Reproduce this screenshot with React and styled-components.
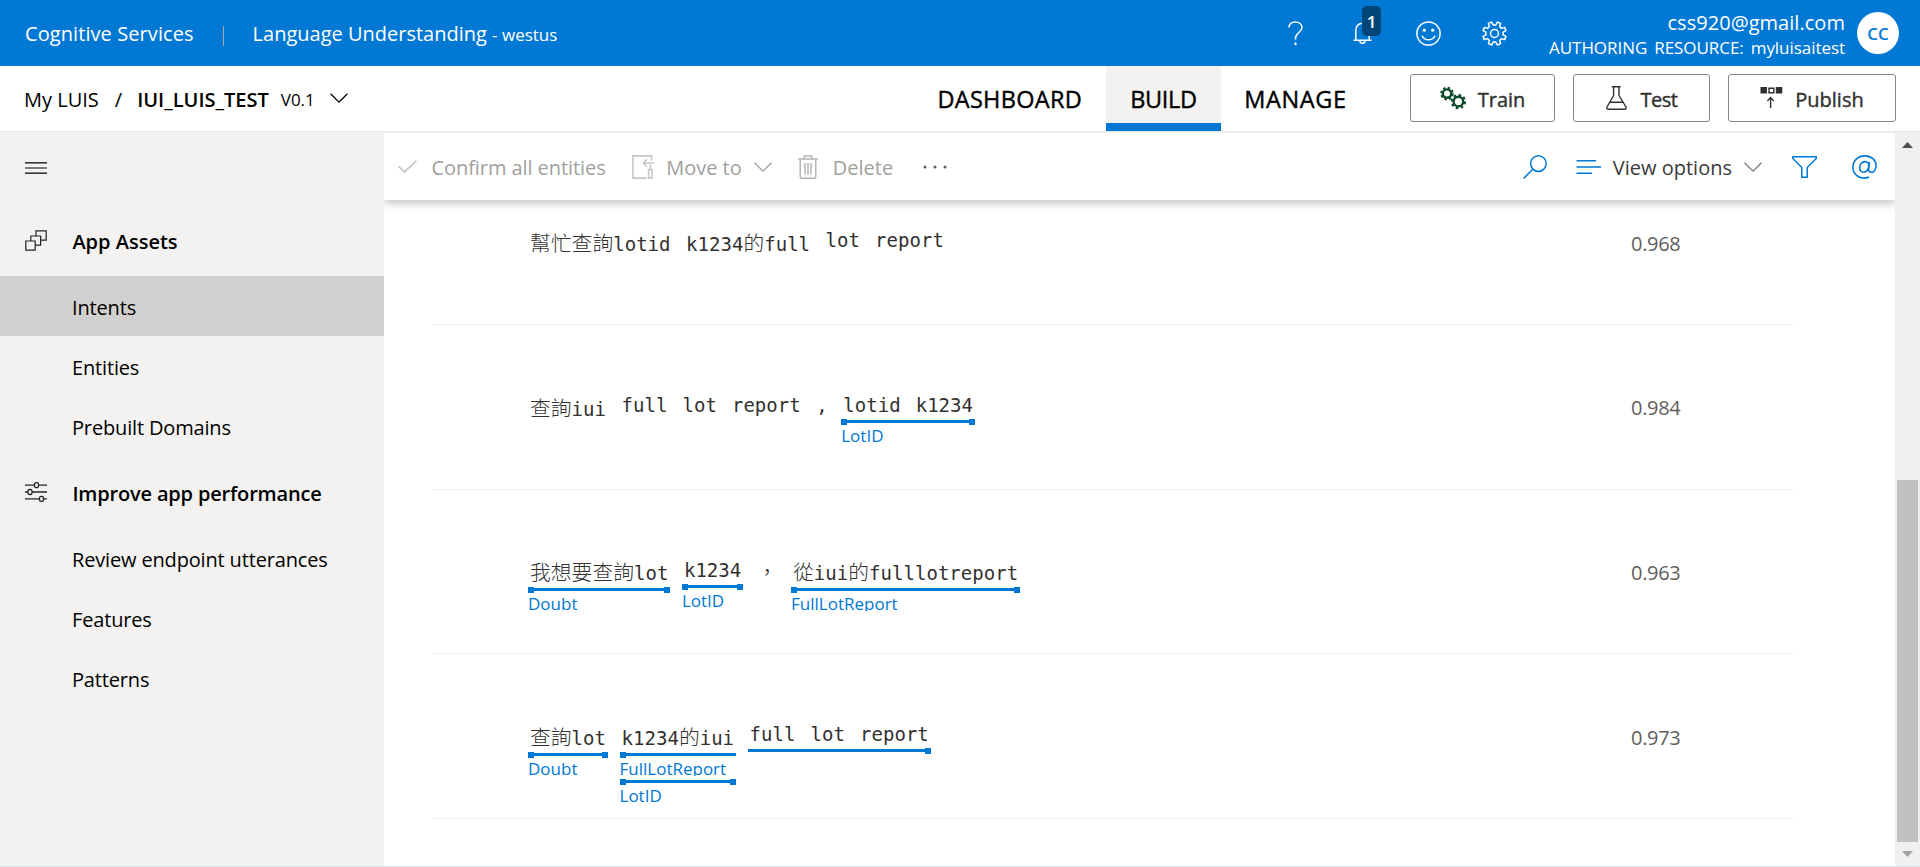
import React from "react";
import styled, { createGlobalStyle, css } from "styled-components";

const BLUE = "#0078d4";

const GlobalStyle = createGlobalStyle`
  * { box-sizing: border-box; }
  body {
    margin: 0;
    font-family: "Open Sans", "Noto Sans CJK TC", sans-serif;
    font-size: 20px;
    color: #000;
    background: #fff;
    overflow: hidden;
  }
  svg { display: block; flex: none; overflow: visible; }
`;

const medium = css`
  -webkit-text-stroke: 0.4px currentColor;
`;

const Page = styled.div`
  height: 867px;
  display: flex;
  flex-direction: column;
  border-bottom: 1px solid #dde2ee;
`;

/* ---------- top bar ---------- */

const TopBar = styled.header`
  flex: none;
  height: 66px;
  padding: 0 21px 0 25px;
  display: flex;
  align-items: center;
  background: ${BLUE};
  color: #fff;
`;

const Brand = styled.span`
  padding-top: 1px;
  letter-spacing: 0.08px;
`;

const BrandDivider = styled.span`
  width: 1px;
  height: 20px;
  margin: 6px 29px 0 29px;
  background: #a8a4b4;
`;

const Product = styled.span`
  padding-top: 1px;
  flex: 1;
`;

const Region = styled.span`
  font-size: 17px;
`;

const TopIcons = styled.div`
  display: flex;
  align-items: center;
  width: 219px;
`;

const BellWrap = styled.div`
  position: relative;
  margin: 0 44px 0 50px;
`;

const BellCount = styled.span`
  position: absolute;
  left: 9px;
  top: -16px;
  width: 19px;
  height: 30px;
  border-radius: 5px;
  background: #004578;
  font-size: 17px;
  font-weight: 600;
  line-height: 31px;
  text-align: center;
`;

const SettingsWrap = styled.div`
  margin-left: 41px;
`;

const Account = styled.div`
  width: 338px;
  padding-top: 5px;
  display: flex;
  flex-direction: column;
  text-align: right;
  margin-right: 12px;
`;

const Email = styled.span`
  line-height: 24px;
  letter-spacing: 0.04px;
`;

const Resource = styled.span`
  font-size: 17px;
  line-height: 26px;
  letter-spacing: -0.05px;
  word-spacing: 2.6px;
  white-space: pre;
`;

const Avatar = styled.span`
  width: 42px;
  height: 42px;
  border-radius: 50%;
  background: #fff;
  color: ${BLUE};
  font-size: 17px;
  font-weight: 600;
  line-height: 43px;
  text-align: center;
`;

/* ---------- app navigation ---------- */

const NavBar = styled.nav`
  flex: none;
  height: 67px;
  padding: 0 24px 2px 24px;
  display: flex;
  align-items: center;
  background: #fff;
  border-bottom: 1px solid #f3f2f1;
  box-shadow: inset 0 -1px 0 #e8e8e8;
`;

const Crumbs = styled.div`
  flex: 1;
  display: flex;
  align-items: center;
  padding-top: 2px;
`;

const CrumbSlash = styled.span`
  margin: 0 15px 0 16px;
`;

const AppName = styled.span`
  font-weight: 600;
`;

const Version = styled.span`
  font-size: 17px;
  margin: 0 15px 0 12px;
`;

const CrumbChevron = styled.span`
  padding-bottom: 3px;
`;

const Tabs = styled.div`
  display: flex;
  align-self: flex-start;
  height: 65px;
`;

const Tab = styled.a`
  width: ${(p) => p.$width}px;
  padding: 1px ${(p) => p.$shift || 0}px 0 0;
  display: flex;
  align-items: center;
  justify-content: center;
  font-size: 23.5px;
  letter-spacing: ${(p) => p.$tracking || 0}px;
  color: #000;
  ${medium}
  ${(p) =>
    p.$active &&
    css`
      background: #f3f2f1;
      box-shadow: inset 0 -8px 0 ${BLUE};
    `}
`;

const Actions = styled.div`
  display: flex;
  gap: 18px;
  margin-left: 40px;
`;

const ActionButton = styled.button`
  width: ${(p) => p.$width}px;
  height: 48px;
  padding: 0;
  display: flex;
  align-items: center;
  justify-content: center;
  gap: ${(p) => p.$gap || 12}px;
  border: 1px solid #8a8886;
  border-radius: 3px;
  background: #fff;
  color: #323130;
  font: inherit;
  ${medium}
`;

const ActionLabel = styled.span`
  padding-top: 2px;
  letter-spacing: ${(p) => p.$tracking || 0}px;
`;

/* ---------- side navigation ---------- */

const Body = styled.div`
  flex: 1;
  min-height: 0;
  display: flex;
`;

const Sidebar = styled.aside`
  width: 384px;
  background: #f3f2f1;
`;

const MenuToggle = styled.div`
  height: 71px;
  padding: 0 0 1px 25px;
  display: flex;
  align-items: center;
`;

const SideHeading = styled.div`
  height: 72px;
  padding-left: 25px;
  display: flex;
  align-items: center;
  gap: 25.4px;
  font-weight: 600;
  letter-spacing: ${(p) => p.$tracking || 0}px;
`;

const HeadingLabel = styled.span`
  padding-top: 3px;
`;

const SideItem = styled.a`
  height: 60px;
  padding: 3px 0 0 72px;
  display: flex;
  align-items: center;
  letter-spacing: -0.16px;
  background: ${(p) => (p.$active ? "#d2d0ce" : "transparent")};
`;

/* ---------- main area ---------- */

const Main = styled.main`
  flex: 1;
  display: flex;
  flex-direction: column;
  overflow: hidden;
`;

const Toolbar = styled.div`
  position: relative;
  z-index: 1;
  flex: none;
  height: 67px;
  padding: 0 18px 0 14px;
  display: flex;
  align-items: center;
  background: #fff;
  box-shadow: 0 3px 9px rgba(0, 0, 0, 0.25);
`;

const Command = styled.div`
  display: flex;
  align-items: center;
  gap: ${(p) => p.$gap}px;
  margin-right: ${(p) => p.$after}px;
  color: ${(p) => (p.$enabled ? "#3b3a39" : "#a19f9d")};
`;

const CommandLabel = styled.span`
  padding-top: 2px;
  letter-spacing: ${(p) => p.$tracking || 0}px;
`;

const Spacer = styled.div`
  flex: 1;
`;

const Rows = styled.div`
  margin: -39.7px 102px 0 48px;
`;

const Row = styled.div`
  height: 164.7px;
  padding-left: 96px;
  display: flex;
  border-bottom: 1px solid #f0eeed;
`;

const Utterance = styled.div`
  width: 1103px;
  padding-top: 68px;
  display: flex;
  align-items: flex-start;
  gap: 11.5px;
  color: #323130;
  font-family: "DejaVu Sans Mono", "Noto Sans CJK TC", monospace;
  font-size: 19px;
  line-height: 24px;
  letter-spacing: 0.03px;
  word-spacing: 3.6px;
`;

const Token = styled.div`
  white-space: pre;
`;

const TokenText = styled.div`
  padding: ${(p) => (p.$han ? 1.6 : 0)}px 2px 2px;
`;

const Han = styled.span`
  font-family: "Noto Sans CJK TC", sans-serif;
  font-size: 20.8px;
  font-weight: 300;
  letter-spacing: 0;
`;

const Span = styled.div`
  height: 6px;
  display: flex;
  align-items: center;
  justify-content: space-between;
  background: linear-gradient(${BLUE}, ${BLUE}) 0 1px / 100% 3px no-repeat;
`;

const SpanEnd = styled.i`
  width: 6px;
  height: 6px;
  background: ${(p) => (p.$hidden ? "transparent" : BLUE)};
`;

const SpanLabel = styled.div`
  width: 0;
  height: 18px;
  margin-bottom: 3px;
  font-family: "Open Sans", sans-serif;
  font-size: 17px;
  line-height: 21px;
  letter-spacing: 0;
  color: ${BLUE};
  overflow: visible;
  clip-path: inset(0 -200px 0 -2px);
`;

const Score = styled.div`
  padding-top: 69.4px;
  color: #605e5c;
  letter-spacing: -0.3px;
`;

const Scrollbar = styled.div`
  width: 25px;
  padding: 9px 2px;
  display: flex;
  flex-direction: column;
  align-items: center;
  background: #f0f0f0;
`;

const ScrollGap = styled.div`
  height: 332px;
`;

const ScrollThumb = styled.div`
  width: 21px;
  height: 362px;
  margin-bottom: 9px;
  background: #c1c1c1;
`;

/* ---------- icons ---------- */

function gearPath(cx, cy, teeth, outer, inner, turn = 0) {
  const step = (Math.PI * 2) / teeth;
  const pts = [];
  for (let i = 0; i < teeth; i++) {
    const a = i * step + turn;
    [[-0.3, inner], [-0.19, outer], [0.19, outer], [0.3, inner]].forEach(([f, r]) => {
      pts.push(`${(cx + r * Math.sin(a + f * step)).toFixed(2)} ${(cy - r * Math.cos(a + f * step)).toFixed(2)}`);
    });
  }
  return `M${pts.join("L")}Z`;
}

const Icon = ({ w, h, color = "currentColor", sw = 1.5, children }) => (
  <svg width={w} height={h} viewBox={`0 0 ${w} ${h}`} fill="none" stroke={color} strokeWidth={sw}>
    {children}
  </svg>
);

const HelpIcon = () => (
  <Icon w={15} h={24}>
    <path d="M1 6.5C1 3 3.8 1 7.3 1C11 1 14 3.2 14 6.6C14 11.5 7.5 11.5 7.5 17V18.5" />
    <path d="M7.5 21.5V24" strokeWidth="2" />
  </Icon>
);

const BellIcon = () => (
  <Icon w={19} h={22}>
    <path d="M0.5 18.2H18.5M2.8 18V8.5C2.8 4.3 5.6 1.2 9.5 1.2C13.4 1.2 16.2 4.3 16.2 8.5V18M6.8 18.5C6.8 20 8 21.2 9.5 21.2C11 21.2 12.2 20 12.2 18.5" />
  </Icon>
);

const SmileIcon = () => (
  <Icon w={25} h={25}>
    <circle cx="12.5" cy="12.5" r="11.6" />
    <circle cx="8.3" cy="9.2" r="1.6" fill="currentColor" stroke="none" />
    <circle cx="16.7" cy="9.2" r="1.6" fill="currentColor" stroke="none" />
    <path d="M6 14.8C8.5 20.2 16.5 20.2 19 14.8" />
  </Icon>
);

const SettingsIcon = () => (
  <Icon w={25} h={25}>
    <path d={gearPath(12.5, 12.5, 8, 11.8, 8.7, Math.PI / 8)} strokeLinejoin="round" />
    <circle cx="12.5" cy="12.5" r="4" />
  </Icon>
);

const Chevron = ({ color = "#000" }) => (
  <Icon w={18} h={10} color={color} sw={1.3}>
    <path d="M0.6 0.8L9 9.2L17.4 0.8" />
  </Icon>
);

const TrainIcon = () => (
  <Icon w={26} h={22} color="#0b4a2b" sw={2.4}>
    <circle cx="7" cy="6.6" r="4.2" />
    <circle cx="7" cy="6.6" r="5.9" strokeWidth="1.8" strokeDasharray="2.4 2.23" />
    <circle cx="18.4" cy="14.6" r="4.8" />
    <circle cx="18.4" cy="14.6" r="6.7" strokeWidth="2" strokeDasharray="2.7 2.56" />
  </Icon>
);

const FlaskIcon = () => (
  <Icon w={21} h={24} color="#323130" sw={1.4}>
    <path d="M5.8 0.8H14.6M7.6 1V9.5L1 21C0.5 22.3 1 23.2 2.4 23.2H18.6C20 23.2 20.5 22.3 20 21L13 9.5V1M4.5 16.2H16.3" strokeLinejoin="round" />
  </Icon>
);

const PublishIcon = () => (
  <Icon w={23} h={24} color="#323130" sw={1.4}>
    <path d="M0.5 1H7V7.4H0.5ZM15.8 1H22.3V7.4H15.8Z" fill="#323130" stroke="none" />
    <path d="M9 2.2H13.8V6.8H9ZM10.6 22V12M7.4 14.9L10.6 11.6L13.8 14.9" />
  </Icon>
);

const HamburgerIcon = () => (
  <Icon w={22} h={12} color="#000" sw={1.2}>
    <path d="M0 0.8H22M0 6H22M0 11.2H22" />
  </Icon>
);

const AssetsIcon = () => (
  <Icon w={22} h={21} color="#222" sw={1.2}>
    <path d="M0.8 11H10.2V20.2H0.8ZM5.8 11V6H15.6V15.2H10.2M11 6V0.8H21.2V10.2H15.6" />
  </Icon>
);

const SlidersIcon = () => (
  <Icon w={22} h={20} color="#222" sw={1.3}>
    <path d="M0 3.2H9.5M13.5 3.2H22M0 10H3M7 10H22M0 16.8H14.5M18.5 16.8H22" />
    <rect x="9.5" y="0.7" width="4" height="5" rx="1.6" />
    <rect x="3" y="7.5" width="4" height="5" rx="1.6" />
    <rect x="14.5" y="14.3" width="4" height="5" rx="1.6" />
  </Icon>
);

const CheckIcon = () => (
  <Icon w={19} h={13} color="#c8c6c4" sw={1.7}>
    <path d="M0.6 6.4L6.4 12L18.4 0.8" />
  </Icon>
);

const MoveIcon = () => (
  <Icon w={22} h={24} color="#c8c6c4" sw={1.6}>
    <path d="M19.6 5.5V0.9H0.9V23.1H15M11.4 8H21.8M15 4.3L11.3 8L15 11.7M18.3 9.5V14.5" />
    <rect x="16.6" y="14.6" width="3.4" height="8.5" />
  </Icon>
);

const TrashIcon = () => (
  <Icon w={20} h={24} color="#b8b6b4" sw={1.5}>
    <path d="M0 4H20M6.3 3.8V0.9H13.7V3.8M2.2 4.2V21.5C2.2 22.6 2.8 23.2 3.8 23.2H16.2C17.2 23.2 17.8 22.6 17.8 21.5V4.2M7 8V19.5M10 8V19.5M13 8V19.5" />
  </Icon>
);

const MoreIcon = () => (
  <Icon w={24} h={4} color="none">
    <g fill="#605e5c">
      <circle cx="2" cy="2" r="1.5" />
      <circle cx="12" cy="2" r="1.5" />
      <circle cx="22" cy="2" r="1.5" />
    </g>
  </Icon>
);

const SearchIcon = () => (
  <Icon w={24} h={24} color={BLUE}>
    <circle cx="15.4" cy="8.6" r="7.8" />
    <path d="M9.8 14.2L0.6 23.4" />
  </Icon>
);

const LinesIcon = () => (
  <Icon w={25} h={14} color={BLUE}>
    <path d="M0.5 0.8H20M0.5 7H25M0.5 13.2H16" />
  </Icon>
);

const FilterIcon = () => (
  <Icon w={25} h={22} color={BLUE}>
    <path d="M0.8 0.8H24.2V2.5L15.2 11.5V21.2H9.8V11.5L0.8 2.5Z" />
  </Icon>
);

const MentionIcon = () => (
  <Icon w={25} h={24} color={BLUE} sw={1.6}>
    <path d="M17 22C9.5 25.2 0.9 20.6 0.9 12.2C0.9 5.6 6 0.9 12.8 0.9C19.3 0.9 24.1 4.9 24.1 10.6C24.1 14.6 21.9 17.3 19.3 17.3C17.2 17.3 16.4 15.8 16.7 13.4L17.4 7" />
    <path d="M16.9 11.2C16.3 15 14.3 17.3 11.6 17.3C9.1 17.3 7.6 15.5 7.6 12.9C7.6 9.3 10 6.6 13 6.6C15.6 6.6 17.2 8.4 16.9 11.2Z" />
  </Icon>
);

const ScrollArrow = ({ down }) => (
  <svg width="11" height="6" viewBox="0 0 11 6">
    <path d={down ? "M0 0H11L5.5 6Z" : "M0 6H11L5.5 0Z"} fill={down ? "#a3a3a3" : "#505050"} />
  </svg>
);

/* ---------- data ---------- */

const ROWS = [
  { score: "0.968", tokens: [{ t: "幫忙查詢lotid" }, { t: "k1234的full" }, { t: "lot report" }] },
  {
    score: "0.984",
    tokens: [
      { t: "查詢iui" },
      { t: "full lot report" },
      { t: "," },
      { t: "lotid k1234", spans: [{ label: "LotID" }] },
    ],
  },
  {
    score: "0.963",
    tokens: [
      { t: "我想要查詢lot", spans: [{ label: "Doubt" }] },
      { t: "k1234", spans: [{ label: "LotID" }] },
      { t: "，" },
      { t: "從iui的fulllotreport", spans: [{ label: "FullLotReport" }] },
    ],
  },
  {
    score: "0.973",
    tokens: [
      { t: "查詢lot", spans: [{ label: "Doubt" }] },
      { t: "k1234的iui", spans: [{ label: "FullLotReport", openEnd: true }, { label: "LotID" }] },
      { t: "full lot report", spans: [{ openStart: true }] },
    ],
  },
];

const HAN = /[\u3000-\u9fff\uff00-\uffef]/;

const splitHan = (text) =>
  text
    .split(/([\u3000-\u9fff\uff00-\uffef]+)/)
    .filter(Boolean)
    .map((part, i) => (HAN.test(part) ? <Han key={i}>{part}</Han> : part));

function TokenView({ token }) {
  return (
    <Token>
      <TokenText $han={HAN.test(token.t)}>{splitHan(token.t)}</TokenText>
      {(token.spans || []).map((s, i) => (
        <React.Fragment key={i}>
          <Span>
            <SpanEnd $hidden={s.openStart} />
            <SpanEnd $hidden={s.openEnd} />
          </Span>
          {s.label && <SpanLabel>{s.label}</SpanLabel>}
        </React.Fragment>
      ))}
    </Token>
  );
}

export default function App() {
  return (
    <Page>
      <GlobalStyle />
      <TopBar>
        <Brand>Cognitive Services</Brand>
        <BrandDivider />
        <Product>
          Language Understanding <Region>- westus</Region>
        </Product>
        <TopIcons>
          <HelpIcon />
          <BellWrap>
            <BellIcon />
            <BellCount>1</BellCount>
          </BellWrap>
          <SmileIcon />
          <SettingsWrap>
            <SettingsIcon />
          </SettingsWrap>
        </TopIcons>
        <Account>
          <Email>css920@gmail.com</Email>
          <Resource>AUTHORING RESOURCE: myluisaitest</Resource>
        </Account>
        <Avatar>CC</Avatar>
      </TopBar>

      <NavBar>
        <Crumbs>
          <span>My LUIS</span>
          <CrumbSlash>/</CrumbSlash>
          <AppName>IUI_LUIS_TEST</AppName>
          <Version>V0.1</Version>
          <CrumbChevron>
            <Chevron />
          </CrumbChevron>
        </Crumbs>
        <Tabs>
          <Tab $width={191} $tracking={0.3} $shift={1.5}>DASHBOARD</Tab>
          <Tab $width={115} $active $tracking={-0.3}>BUILD</Tab>
          <Tab $width={149} $tracking={0.6}>MANAGE</Tab>
        </Tabs>
        <Actions>
          <ActionButton $width={145}>
            <TrainIcon />
            <ActionLabel>Train</ActionLabel>
          </ActionButton>
          <ActionButton $width={137} $gap={14}>
            <FlaskIcon />
            <ActionLabel $tracking={-0.5}>Test</ActionLabel>
          </ActionButton>
          <ActionButton $width={168}>
            <PublishIcon />
            <ActionLabel>Publish</ActionLabel>
          </ActionButton>
        </Actions>
      </NavBar>

      <Body>
        <Sidebar>
          <MenuToggle>
            <HamburgerIcon />
          </MenuToggle>
          <SideHeading>
            <AssetsIcon />
            <HeadingLabel>App Assets</HeadingLabel>
          </SideHeading>
          <SideItem $active>Intents</SideItem>
          <SideItem>Entities</SideItem>
          <SideItem>Prebuilt Domains</SideItem>
          <SideHeading $tracking={-0.17}>
            <SlidersIcon />
            <HeadingLabel>Improve app performance</HeadingLabel>
          </SideHeading>
          <SideItem>Review endpoint utterances</SideItem>
          <SideItem>Features</SideItem>
          <SideItem>Patterns</SideItem>
        </Sidebar>

        <Main>
          <Toolbar>
            <Command $gap={14.5} $after={26}>
              <CheckIcon />
              <CommandLabel $tracking={-0.07}>Confirm all entities</CommandLabel>
            </Command>
            <Command $gap={12.5} $after={26}>
              <MoveIcon />
              <CommandLabel>Move to</CommandLabel>
              <Chevron color="#a19f9d" />
            </Command>
            <Command $gap={14.5} $after={30}>
              <TrashIcon />
              <CommandLabel>Delete</CommandLabel>
            </Command>
            <MoreIcon />
            <Spacer />
            <Command $after={29}>
              <SearchIcon />
            </Command>
            <Command $gap={12} $after={30} $enabled>
              <LinesIcon />
              <CommandLabel>View options</CommandLabel>
              <Chevron color="#797775" />
            </Command>
            <Command $after={35}>
              <FilterIcon />
            </Command>
            <MentionIcon />
          </Toolbar>
          <Rows>
            {ROWS.map((row) => (
              <Row key={row.score}>
                <Utterance>
                  {row.tokens.map((token, i) => (
                    <TokenView key={i} token={token} />
                  ))}
                </Utterance>
                <Score>{row.score}</Score>
              </Row>
            ))}
          </Rows>
        </Main>

        <Scrollbar>
          <ScrollArrow />
          <ScrollGap />
          <ScrollThumb />
          <ScrollArrow down />
        </Scrollbar>
      </Body>
    </Page>
  );
}
